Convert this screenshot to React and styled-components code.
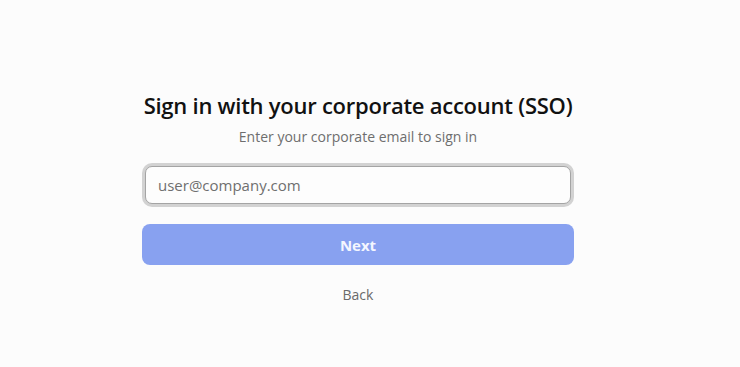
import React, { useState } from "react";
import styled, { createGlobalStyle } from "styled-components";

const GlobalStyle = createGlobalStyle`
  html, body {
    margin: 0;
    padding: 0;
    background: #fcfcfc;
    font-family: "Open Sans", "Noto Sans", sans-serif;
  }
`;

const App = () => {
  const [email, setEmail] = useState("");

  return (
    <Page>
      <GlobalStyle />
      <Form onSubmit={(e) => e.preventDefault()}>
        <Title>Sign in with your corporate account (SSO)</Title>
        <Subtitle>Enter your corporate email to sign in</Subtitle>
        <Input
          type="email"
          placeholder="user@company.com"
          value={email}
          onChange={(e) => setEmail(e.target.value)}
        />
        <NextButton type="submit" disabled={!email}>
          Next
        </NextButton>
        <BackLink type="button">Back</BackLink>
      </Form>
    </Page>
  );
};

export default App;

const Page = styled.div`
  width: 100%;
  height: 367px;
  display: flex;
  justify-content: center;
  padding-right: 24px;
  box-sizing: border-box;
`;

const Form = styled.form`
  width: 432px;
  padding-top: 91px;
  display: flex;
  flex-direction: column;
  align-items: stretch;
`;

const Title = styled.h1`
  margin: 0;
  text-align: center;
  font-size: 22px;
  font-weight: 600;
  line-height: 29px;
  color: #111;
  letter-spacing: -0.25px;
`;

const Subtitle = styled.p`
  margin: 7px 0 0;
  text-align: center;
  font-size: 14px;
  line-height: 20px;
  color: #6e6e6e;
`;

const Input = styled.input`
  margin: 19px 3px 0;
  height: 38px;
  box-sizing: border-box;
  border: 1px solid #a4a4a4;
  border-radius: 7px;
  box-shadow: 0 0 0 3px #d2d2d2;
  background: #fdfdfd;
  padding: 0 12px;
  font-family: inherit;
  font-size: 15px;
  color: #222;
  outline: none;

  &::placeholder {
    color: #6f6f6f;
  }
`;

const NextButton = styled.button`
  margin-top: 20px;
  height: 41px;
  border: none;
  border-radius: 8px;
  background: #88a1f0;
  color: #f4f6ff;
  font-family: inherit;
  font-size: 15px;
  font-weight: 700;
  cursor: pointer;

  &:disabled {
    cursor: default;
  }
`;

const BackLink = styled.button`
  align-self: center;
  margin-top: 20px;
  border: none;
  background: none;
  padding: 0;
  font-family: inherit;
  font-size: 14px;
  line-height: 20px;
  color: #6a6a6a;
  cursor: pointer;
`;
